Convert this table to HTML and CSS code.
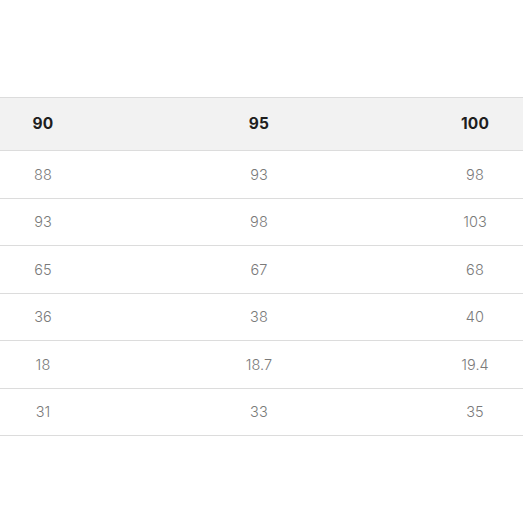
FILE: index.html
```html
<!DOCTYPE html>
<html>
<head>
<meta charset="utf-8">
<link rel="stylesheet" href="styles.css">
</head>
<body>
<div class="page">
  <div class="table-wrap">
    <div class="size-table">
      <div class="row head"><div class="cell">90</div><div class="cell">95</div><div class="cell">100</div></div>
      <div class="row"><div class="cell">88</div><div class="cell">93</div><div class="cell">98</div></div>
      <div class="row"><div class="cell">93</div><div class="cell">98</div><div class="cell">103</div></div>
      <div class="row"><div class="cell">65</div><div class="cell">67</div><div class="cell">68</div></div>
      <div class="row"><div class="cell">36</div><div class="cell">38</div><div class="cell">40</div></div>
      <div class="row"><div class="cell">18</div><div class="cell">18.7</div><div class="cell">19.4</div></div>
      <div class="row"><div class="cell">31</div><div class="cell">33</div><div class="cell">35</div></div>
    </div>
  </div>
</div>
</body>
</html>
```
FILE: styles.css
```css
html, body {
  margin: 0;
  padding: 0;
  background: #fff;
}
body {
  width: 523px;
  height: 523px;
  overflow: hidden;
  font-family: Inter, "Open Sans", "Liberation Sans", sans-serif;
}
.page {
  padding-top: 97px;
}
.table-wrap {
  overflow: hidden;
  width: 523px;
}
.size-table {
  margin-left: -65px;
  width: 648px;
  border-top: 1px solid #dcdcdc;
}
.row {
  display: grid;
  grid-template-columns: 216px 216px 216px;
  height: 46.5px;
  border-bottom: 1px solid #dcdcdc;
  align-items: center;
}
.row.head {
  height: 52px;
  background: #f2f2f2;
  padding-bottom: 2px;
  box-sizing: border-box;
  height: 53px;
}
.cell {
  text-align: center;
  font-size: 14.5px;
  font-weight: 300;
  color: #7a7a7a;
  letter-spacing: 0.1px;
}
.head .cell {
  font-weight: 700;
  font-size: 15.5px;
  color: #1e1e1e;
  letter-spacing: 0.2px;
}
```
